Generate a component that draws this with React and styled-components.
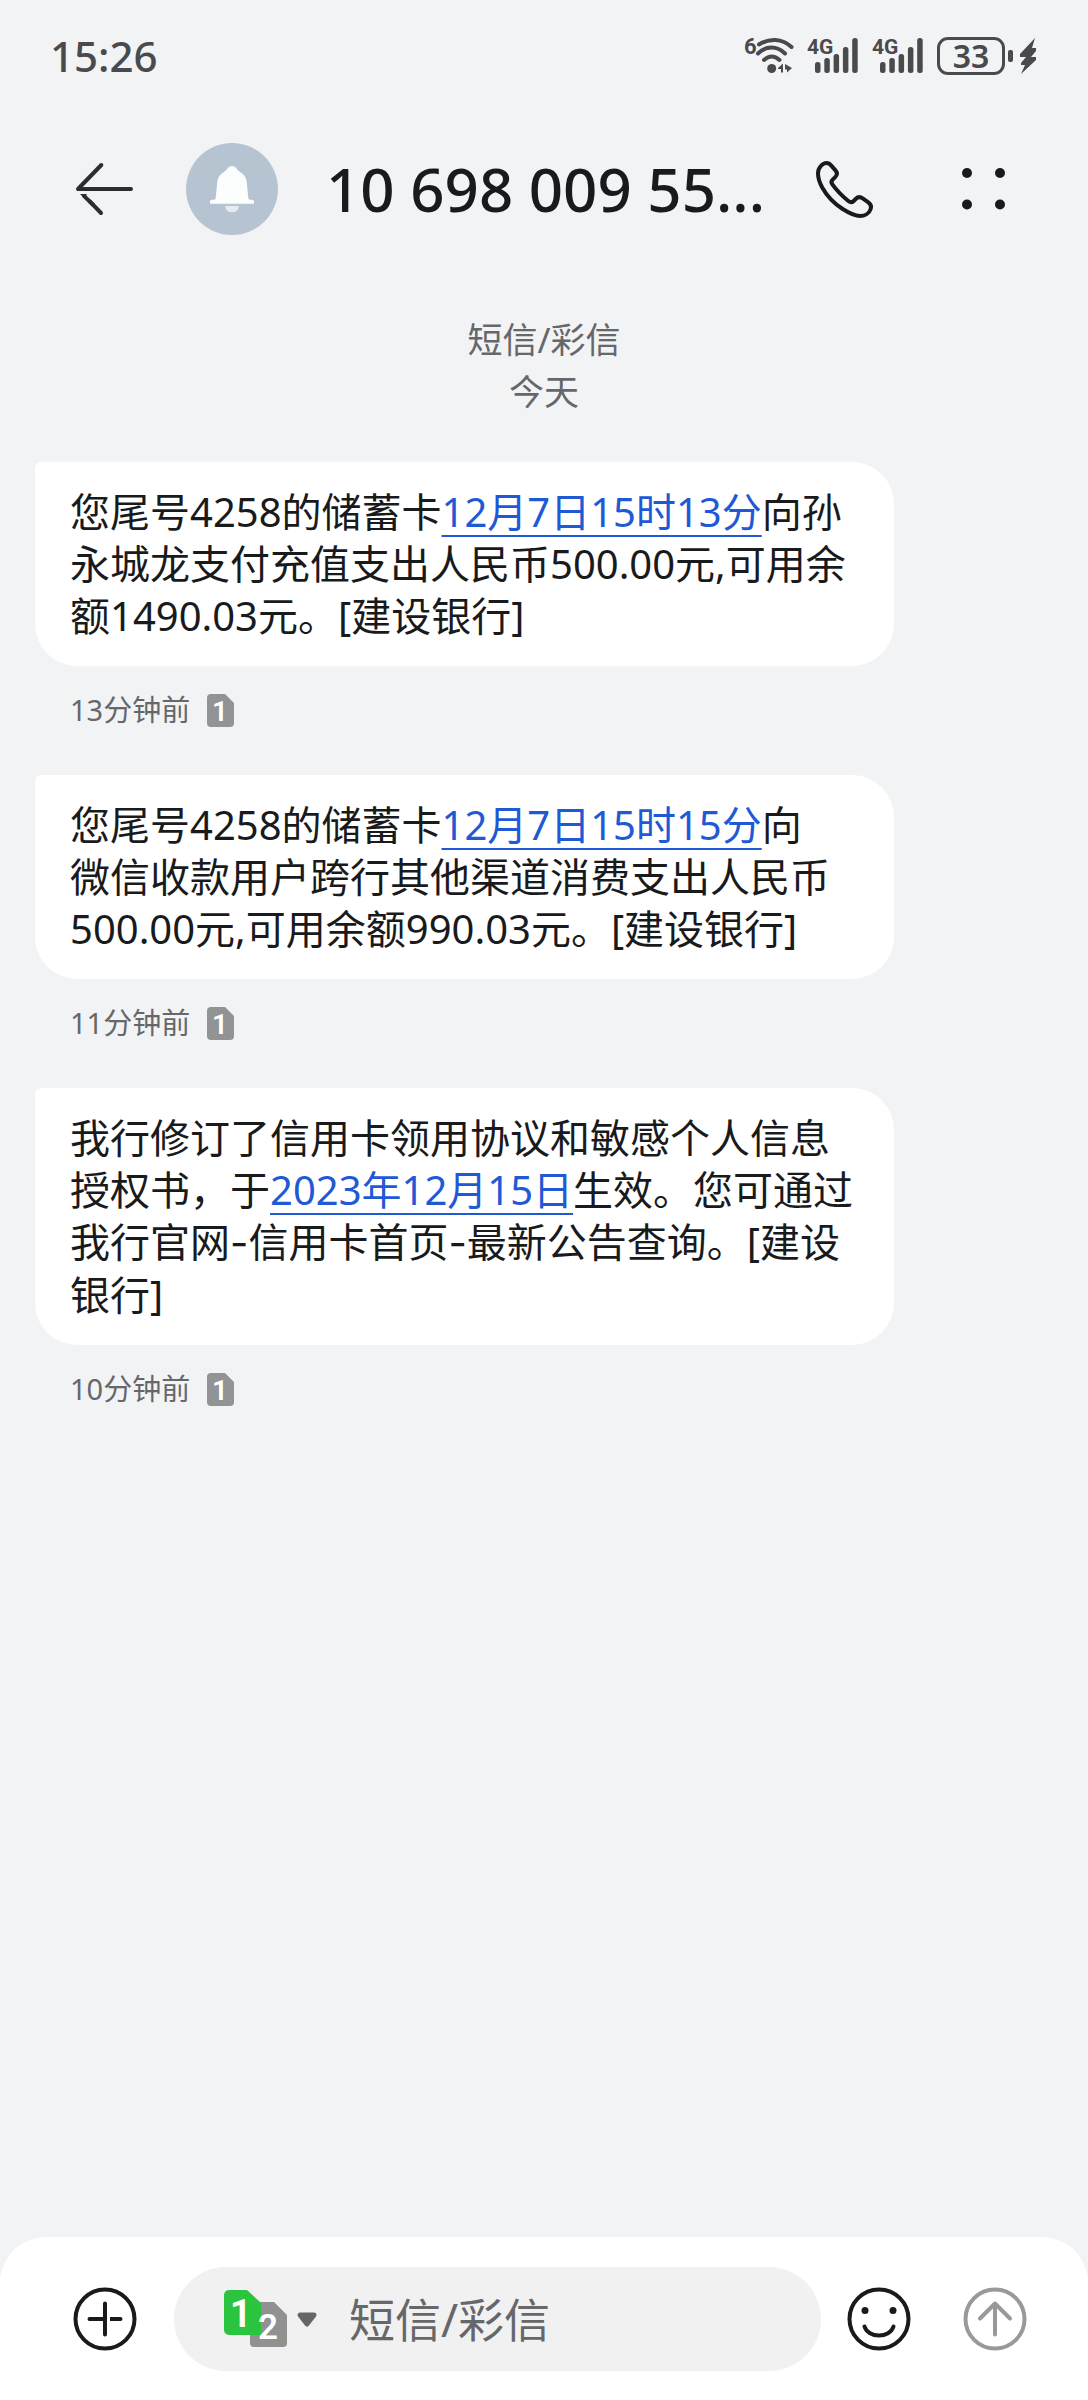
import React from 'react';
import styled, { createGlobalStyle } from 'styled-components';

const colors = {
  page: '#f1f3f5',
  text: '#191a1c',
  muted: '#66676a',
  status: '#4a4a4c',
  link: '#1f59d6',
  avatar: '#b6c4d2',
};

const GlobalStyle = createGlobalStyle`
  * {
    box-sizing: border-box;
  }

  body {
    margin: 0;
    background: ${colors.page};
    color: ${colors.text};
    font-family: 'Noto Sans', 'Noto Sans CJK SC', sans-serif;
  }

  button,
  input {
    margin: 0;
    padding: 0;
    border: 0;
    background: none;
    color: inherit;
    font: inherit;
  }

  svg {
    display: block;
    overflow: visible;
  }
`;

const Page = styled.div`
  display: flex;
  flex-direction: column;
  min-height: 100vh;
`;

const StatusBar = styled.div`
  display: flex;
  align-items: center;
  justify-content: space-between;
  height: 112px;
  padding: 0 51px 0 50px;
  color: ${colors.status};
`;

const Clock = styled.time`
  font-size: 42px;
  font-weight: 500;
  line-height: 52px;
`;

const StatusIcons = styled.div`
  display: flex;
  align-items: center;
`;

const Glyph = styled.svg`
  width: ${({ $width }) => $width}px;
  height: 38px;
  margin-right: ${({ $gap }) => $gap || 0}px;
  fill: currentColor;
`;

const NetworkLabel = styled.text`
  font-family: Roboto, sans-serif;
  font-size: ${({ $size }) => $size}px;
  font-weight: 700;
`;

const Battery = styled.div`
  display: flex;
  align-items: center;
  justify-content: center;
  width: 68px;
  height: 38px;
  margin-right: 3px;
  border: 3px solid currentColor;
  border-radius: 11px;
  font-size: 32px;
  font-weight: 600;
  line-height: 32px;
`;

const BatteryTip = styled.span`
  width: 5px;
  height: 12px;
  margin-right: 7px;
  border-radius: 2px;
  background: currentColor;
`;

const Header = styled.header`
  display: flex;
  align-items: center;
  height: 154px;
  padding: 0 83px 0 76px;
`;

const IconButton = styled.button`
  flex: none;
  cursor: pointer;
`;

const Avatar = styled.span`
  flex: none;
  width: 92px;
  height: 92px;
  margin: 0 48px 0 53px;
  border-radius: 50%;
  background: ${colors.avatar};
`;

const Title = styled.h1`
  flex: 1;
  min-width: 0;
  margin: 0;
  overflow: hidden;
  font-size: 60px;
  font-weight: 500;
  line-height: 84px;
  white-space: nowrap;
`;

const HeaderActions = styled.div`
  display: flex;
  align-items: center;
  gap: 89px;
`;

const Thread = styled.main`
  flex: 1;
`;

const ThreadLabel = styled.p`
  margin: 0;
  padding: 48px 0 44px;
  color: ${colors.muted};
  font-size: 35px;
  line-height: 52px;
  text-align: center;
`;

const Messages = styled.ol`
  display: flex;
  flex-direction: column;
  gap: 45px;
  margin: 0;
  padding: 0 194px 0 35px;
  list-style: none;
`;

const Bubble = styled.p`
  margin: 0;
  padding: 24px 35px;
  border-radius: 6px 42px 42px 42px;
  background: #fff;
  font-size: 40px;
  line-height: 52px;
`;

const DateLink = styled.a`
  color: ${colors.link};
  text-decoration: underline 2px;
  text-underline-offset: 8px;
  text-decoration-skip-ink: none;
`;

const Dash = styled.span`
  font-family: Inter, sans-serif;
`;

const Meta = styled.div`
  display: flex;
  align-items: center;
  gap: 17px;
  height: 40px;
  margin-top: 24px;
  padding-left: 35px;
  color: ${colors.muted};
  font-size: 29px;
  line-height: 40px;
`;

const SimText = styled.text`
  fill: #fff;
  font-family: Roboto, sans-serif;
  font-size: ${({ $size }) => $size}px;
  font-weight: 600;
  text-anchor: middle;
`;

const Composer = styled.form`
  display: flex;
  align-items: center;
  padding: 30px 61px 29px 73px;
  border-radius: 46px 46px 0 0;
  background: #fff;
`;

const Field = styled.div`
  display: flex;
  flex: 1;
  align-items: center;
  min-width: 0;
  height: 104px;
  margin: 0 26px 0 37px;
  padding: 0 40px 0 50px;
  border-radius: 52px;
  background: #f1f1f1;
`;

const TextInput = styled.input`
  flex: 1;
  min-width: 0;
  height: 68px;
  margin-left: 31px;
  outline: 0;
  font-size: 46px;
  line-height: 68px;

  &::placeholder {
    color: ${colors.muted};
    opacity: 1;
  }
`;

const SendButton = styled(IconButton)`
  margin-left: 52px;
  color: #999;
`;

const messages = [
  {
    time: '13分钟前',
    body: (
      <>
        您尾号4258的储蓄卡<DateLink href="#date-1">12月7日15时13分</DateLink>
        向孙永城龙支付充值支出人民币500.00元,可用余额1490.03元。[建设银行]
      </>
    ),
  },
  {
    time: '11分钟前',
    body: (
      <>
        您尾号4258的储蓄卡<DateLink href="#date-2">12月7日15时15分</DateLink>向
        <br />
        微信收款用户跨行其他渠道消费支出人民币500.00元,可用余额990.03元。[建设银行]
      </>
    ),
  },
  {
    time: '10分钟前',
    body: (
      <>
        我行修订了信用卡领用协议和敏感个人信息授权书，于
        <DateLink href="#date-3">2023年12月15日</DateLink>
        生效。您可通过我行官网<Dash>-</Dash>信用卡首页<Dash>-</Dash>最新公告查询。[建设银行]
      </>
    ),
  },
];

const Wifi = () => (
  <Glyph $width={50} $gap={12} viewBox="0 0 50 38" aria-label="Wi-Fi 6">
    <NetworkLabel x="-1" y="17" $size={22}>
      6
    </NetworkLabel>
    <g fill="none" stroke="currentColor" strokeWidth="4" strokeLinecap="round">
      <path d="M14 7.500C24 1 37 1 46.500 10" />
      <path d="M13 16.500C21 8.500 32 8.500 40 16.500" />
      <path d="M19 23C24 18.500 29.500 18.500 34.500 23" />
    </g>
    <circle cx="26.700" cy="31.500" r="4.500" />
    <path d="M33 31l5-4.500v9h-2v-3.500h-3zM40 27l7 4-5 4.500v-3h-2z" />
  </Glyph>
);

const Signal = ({ gap }) => (
  <Glyph $width={51} $gap={gap} viewBox="0 0 51 38" aria-label="4G">
    <NetworkLabel x="0" y="17" $size={21}>
      4G
    </NetworkLabel>
    {[25, 21, 17, 10, 1].map((top, i) => (
      <rect key={top} x={8 + i * 9.3} y={top} width="5.500" height={36 - top} rx="2.500" />
    ))}
  </Glyph>
);

const Sim = () => (
  <svg width="27" height="33" viewBox="0 0 27 33" role="img" aria-label="SIM 1">
    <path d="M4 0h14l9 9v20a4 4 0 0 1-4 4H4a4 4 0 0 1-4-4V4a4 4 0 0 1 4-4z" fill="#929394" />
    <SimText x="13" y="27" $size={28}>
      1
    </SimText>
  </svg>
);

const SimPicker = () => (
  <svg width="94" height="58" viewBox="0 0 94 58">
    <path d="M30 12h20l13 13v28a4 4 0 0 1-4 4H30a4 4 0 0 1-4-4V16a4 4 0 0 1 4-4z" fill="#919191" />
    <path d="M5 0h18l14 13v32H5a5 5 0 0 1-5-5V5a5 5 0 0 1 5-5z" fill="#2ac43e" />
    <SimText x="17" y="37" $size={39}>
      1
    </SimText>
    <SimText x="44" y="49" $size={35}>
      2
    </SimText>
    <path d="M76 25h14l-7 9z" fill="#666" stroke="#666" strokeWidth="5" strokeLinejoin="round" />
  </svg>
);

const App = () => (
  <>
    <GlobalStyle />
    <Page lang="zh-CN">
      <StatusBar>
        <Clock>15:26</Clock>
        <StatusIcons>
          <Wifi />
          <Signal gap={14} />
          <Signal gap={14} />
          <Battery>33</Battery>
          <BatteryTip />
          <Glyph $width={17} viewBox="0 0 17 38">
            <path d="M15 1L0 17v3h6l-5 6v2h4L1 37l15-14v-3h-5l5-6v-3h-4z" />
          </Glyph>
        </StatusIcons>
      </StatusBar>

      <Header>
        <IconButton type="button" aria-label="返回">
          <svg width="57" height="52" viewBox="228 490 171 156" fill="none" stroke="#2c2d2f" strokeWidth="12">
            <path d="M304 496L234 568H393" strokeLinecap="round" strokeLinejoin="round" />
            <path d="M303 640L270 606" strokeLinecap="round" />
            <path d="M280 616L250 587" />
            <path d="M240 583h20l-2 10-8 0z" fill="#2c2d2f" stroke="none" />
          </svg>
        </IconButton>
        <Avatar>
          <svg width="92" height="92" viewBox="558 429 276 276">
            <path
              d="M630 611v-7q0-5 5-5h8q3 0 4-5L652 545Q655 525 672 516Q680 510 684 504Q688 498 696 498Q704 498 708 504Q712 510 720 516Q737 525 740 545L745 594q1 5 4 5h8q5 0 5 5v7z"
              fill="#fcfdfd"
            />
            <path d="M675 618h42q-3 19-21 19t-21-19z" fill="#e6ebf0" />
          </svg>
        </Avatar>
        <Title>10 698 009 55...</Title>
        <HeaderActions>
          <IconButton type="button" aria-label="拨打电话">
            <svg width="57" height="57" viewBox="258 120 171 171">
              <path
                d="M264 157C264 140 278 126 290 126C296 126 300 129 304 134L317 149C323 156 321 163 315 169L308 176C303 181 303 185 307 190C320 208 338 226 355 240C361 245 366 245 371 240L377 234C383 228 391 227 398 232L415 244C423 250 425 256 422 264C418 277 404 285 390 285C375 285 357 276 338 264C315 249 290 223 277 200C269 186 264 170 264 157Z"
                fill="none"
                stroke={colors.text}
                strokeWidth="12"
              />
            </svg>
          </IconButton>
          <IconButton type="button" aria-label="更多">
            <svg width="43" height="42" viewBox="0 0 43 42" fill={colors.text}>
              <circle cx="5" cy="5" r="5" />
              <circle cx="38" cy="5" r="5" />
              <circle cx="5" cy="36.500" r="5" />
              <circle cx="38" cy="36.500" r="5" />
            </svg>
          </IconButton>
        </HeaderActions>
      </Header>

      <Thread>
        <ThreadLabel>
          短信/彩信
          <br />
          今天
        </ThreadLabel>
        <Messages>
          {messages.map(({ time, body }) => (
            <li key={time}>
              <Bubble>{body}</Bubble>
              <Meta>
                <span>{time}</span>
                <Sim />
              </Meta>
            </li>
          ))}
        </Messages>
      </Thread>

      <Composer onSubmit={e => e.preventDefault()}>
        <IconButton type="button" aria-label="添加附件">
          <svg width="64" height="64" viewBox="0 0 64 64" fill="none" stroke={colors.text} strokeWidth="4">
            <circle cx="32" cy="32" r="29.500" />
            <path d="M32 16.500v31M16.500 32h13M47.500 32h-3" strokeLinecap="round" />
            <path d="M37 32h9" />
          </svg>
        </IconButton>
        <Field>
          <IconButton type="button" aria-label="选择 SIM 卡" aria-haspopup="listbox">
            <SimPicker />
          </IconButton>
          <TextInput type="text" aria-label="短信内容" placeholder="短信/彩信" />
        </Field>
        <IconButton type="button" aria-label="表情">
          <svg width="64" height="64" viewBox="0 0 64 64" fill="none" stroke={colors.text} strokeWidth="4">
            <circle cx="32" cy="32" r="29.500" />
            <path d="M17.500 39.500C21 51.500 43 51.500 46.500 39.500" strokeLinecap="round" />
            <circle cx="18" cy="23.500" r="3.500" fill={colors.text} stroke="none" />
            <circle cx="46" cy="23.500" r="3.500" fill={colors.text} stroke="none" />
          </svg>
        </IconButton>
        <SendButton type="submit" aria-label="发送">
          <svg width="64" height="64" viewBox="0 0 64 64" fill="none" stroke="currentColor" strokeWidth="4">
            <circle cx="32" cy="32" r="29.500" />
            <path d="M32 47.500V17M17 31.500L32 16.500L47 31.500" strokeLinecap="round" strokeLinejoin="round" />
          </svg>
        </SendButton>
      </Composer>
    </Page>
  </>
);

export default App;
